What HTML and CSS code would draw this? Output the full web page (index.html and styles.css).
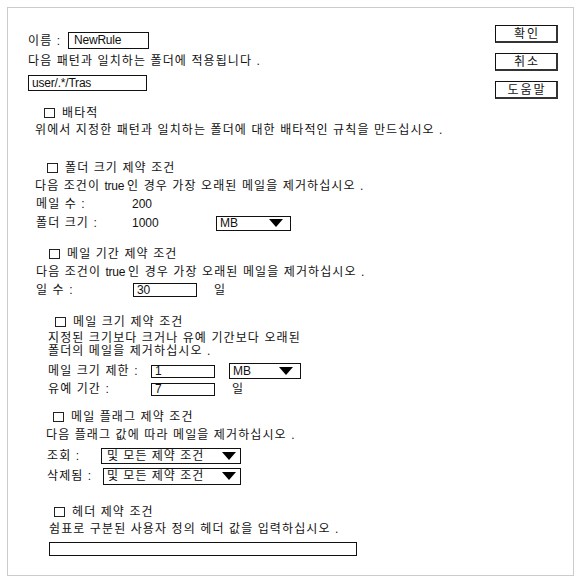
FILE: index.html
```html
<!DOCTYPE html>
<html lang="ko">
<head>
<meta charset="utf-8">
<title>Rule</title>
<link rel="stylesheet" href="styles.css">
</head>
<body>
<div class="frame">
  <div class="main">
    <div class="row r1"><span class="lbl-name">이름 :</span><div class="field f-name">NewRule</div></div>
    <div class="line r2">다음 패턴과 일치하는 폴더에 적용됩니다 .</div>
    <div class="row r3"><div class="field f-path">user/.*/Tras</div></div>

    <div class="row r4"><span class="cb"></span>배타적</div>
    <div class="line r5">위에서 지정한 패턴과 일치하는 폴더에 대한 배타적인 규칙을 만드십시오 .</div>

    <div class="row r6"><span class="cb"></span>폴더 크기 제약 조건</div>
    <div class="line r7">다음 조건이 <span class="lat">true</span>인 경우 가장 오래된 메일을 제거하십시오 .</div>
    <div class="row r8"><span class="lbl-a">메일 수 :</span><span class="val">200</span></div>
    <div class="row r9"><span class="lbl-a">폴더 크기 :</span><span class="val val-w">1000</span><div class="select s-mb1"><span class="opt">MB</span><span class="tri"></span></div></div>

    <div class="row r10"><span class="cb"></span>메일 기간 제약 조건</div>
    <div class="line r11">다음 조건이 <span class="lat">true</span>인 경우 가장 오래된 메일을 제거하십시오 .</div>
    <div class="row r12"><span class="lbl-b">일 수 :</span><div class="field f-days">30</div><span class="unit u1">일</span></div>

    <div class="row r13"><span class="cb"></span>메일 크기 제약 조건</div>
    <div class="para r14">지정된 크기보다 크거나 유예 기간보다 오래된<br>폴더의 메일을 제거하십시오 .</div>
    <div class="row r15"><span class="lbl-c">메일 크기 제한 :</span><div class="field f-small">1</div><div class="select s-mb2"><span class="opt">MB</span><span class="tri"></span></div></div>
    <div class="row r16"><span class="lbl-c">유예 기간 :</span><div class="field f-small">7</div><span class="unit u2">일</span></div>

    <div class="row r17"><span class="cb"></span>메일 플래그 제약 조건</div>
    <div class="line r18">다음 플래그 값에 따라 메일을 제거하십시오 .</div>
    <div class="row r19"><span class="lbl-d">조회 :</span><div class="select s-flag">
      <span class="opt kor">및 모든 제약 조건</span><span class="tri"></span></div></div>
    <div class="row r20"><span class="lbl-e">삭제됨 :</span><div class="select s-flag2">
      <span class="opt kor">및 모든 제약 조건</span><span class="tri"></span></div></div>

    <div class="row r21"><span class="cb"></span>헤더 제약 조건</div>
    <div class="line r22">쉼표로 구분된 사용자 정의 헤더 값을 입력하십시오 .</div>
    <div class="row r23"><div class="field f-header"></div></div>
  </div>
  <div class="side">
    <div class="btn">확인</div>
    <div class="btn">취소</div>
    <div class="btn">도움말</div>
  </div>
</div>
</body>
</html>
```

FILE: styles.css
```css
* { box-sizing: border-box; }

body {
  margin: 0;
  background: #fff;
  color: #111;
  font-family: "Liberation Sans", "Noto Sans CJK KR", sans-serif;
  font-size: 12px;
}

.frame {
  margin: 7px 0 0 7px;
  width: 567px;
  height: 569px;
  border: 1px solid #cbcbcb;
  display: flex;
}

.main { flex: 1; }

.side {
  display: flex;
  flex-direction: column;
  align-items: flex-end;
  gap: 10px;
  padding: 17px 15px 0 0;
}

.btn {
  width: 63px;
  height: 18px;
  border: 1px solid #111;
  border-right: 2px solid #333;
  border-bottom: 2px solid #333;
  display: flex;
  align-items: center;
  justify-content: center;
  letter-spacing: 2px;
  line-height: 1;
  padding-left: 2px;
}

.row {
  display: flex;
  align-items: center;
  height: 16px;
  line-height: 16px;
  white-space: nowrap;
  letter-spacing: 1.1px;
}

.line {
  height: 16px;
  line-height: 16px;
  white-space: nowrap;
  letter-spacing: 1.1px;
}

.lat {
  letter-spacing: -0.3px;
  margin-right: 3px;
}

.para {
  line-height: 13px;
  letter-spacing: 1.1px;
  white-space: nowrap;
}

.cb {
  display: inline-block;
  width: 11px;
  height: 10px;
  border: 1px solid #222;
  margin-right: 7px;
  flex: none;
}

.field {
  border: 1px solid #111;
  height: 15px;
  line-height: 13px;
  padding-left: 3px;
  letter-spacing: -0.2px;
  flex: none;
}

.select {
  display: flex;
  align-items: center;
  justify-content: space-between;
  border: 1px solid #111;
  height: 16px;
  padding: 0 7px 0 3px;
  letter-spacing: 0;
  flex: none;
}

.select .kor { letter-spacing: 1px; }

.tri {
  width: 0;
  height: 0;
  border-left: 7px solid transparent;
  border-right: 7px solid transparent;
  border-top: 8px solid #000;
}

/* row positions */
.r1 { margin: 24px 0 0 20px; height: 17px; }
.r2 { margin: 4px 0 0 20px; }
.r3 { margin: 6px 0 0 20px; }
.r4 { margin: 14px 0 0 36px; }
.r5 { margin: 1px 0 0 27px; }
.r6 { margin: 22px 0 0 39px; }
.r7 { margin: 2px 0 0 27px; }
.r8 { margin: 2px 0 0 28px; }
.r9 { margin: 3px 0 0 28px; }
.r10 { margin: 15px 0 0 41px; }
.r11 { margin: 2px 0 0 28px; }
.r12 { margin: 2px 0 0 28px; }
.r13 { margin: 16px 0 0 47px; }
.r14 { margin: 2px 0 0 40px; }
.r15 { margin: 5px 0 0 40px; }
.r16 { margin: 2px 0 0 40px; }
.r17 { margin: 12px 0 0 45px; }
.r18 { margin: 2px 0 0 38px; }
.r19 { margin: 5px 0 0 39px; }
.r20 { margin: 4px 0 0 39px; }
.r21 { margin: 20px 0 0 46px; }
.r22 { margin: 1px 0 0 41px; }
.r23 { margin: 5px 0 0 41px; height: 14px; }

/* labels and controls */
.lbl-name { width: 40px; }
.f-name { width: 81px; height: 17px; line-height: 15px; padding-left: 5px; }
.f-path { width: 119px; height: 16px; line-height: 14px; }

.lbl-a { width: 96px; }
.val { letter-spacing: 0; }
.val-w { width: 84px; }
.s-mb1 { width: 75px; height: 15px; }

.lbl-b { width: 97px; }
.f-days { width: 64px; height: 14px; line-height: 12px; }
.u1 { margin-left: 17px; }

.lbl-c { width: 103px; }
.f-small { width: 64px; height: 13px; line-height: 11px; }
.s-mb2 { width: 72px; margin-left: 14px; }
.u2 { margin-left: 17px; }

.lbl-d { width: 54px; }
.lbl-e { width: 56px; }
.s-flag { width: 140px; padding: 0 4px 0 5px; }
.s-flag2 { width: 138px; padding: 0 4px 0 3px; height: 17px; }

.f-header { width: 308px; height: 14px; }
```
